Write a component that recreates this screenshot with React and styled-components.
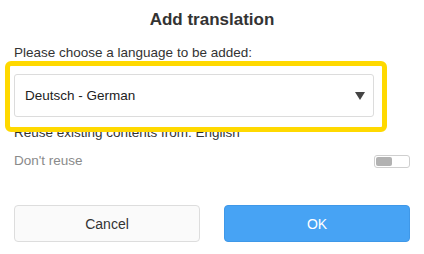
import React from 'react';
import styled, { createGlobalStyle } from 'styled-components';

const GlobalStyle = createGlobalStyle`
    body {
        margin: 0;
        background: #fff;
        font-family: "Liberation Sans", Arial, sans-serif;
        color: #333;
    }
`;

const Dialog = styled.div`
    width: 424px;
    height: 254px;
    box-sizing: border-box;
    padding: 10px 14px 0 14px;
    display: flex;
    flex-direction: column;
    background: #fff;
`;

const Title = styled.h3`
    margin: 0;
    font-size: 17px;
    line-height: 20px;
    font-weight: bold;
    text-align: center;
    color: #333;
`;

const Label = styled.div`
    margin-top: ${p => p.$top || 0}px;
    font-size: 13.5px;
    line-height: 16px;
    color: ${p => (p.$muted ? '#8a8a8a' : '#333')};
`;

const SelectWrap = styled.div`
    position: relative;
    margin-top: 13px;
    width: 360px;
`;

const Highlight = styled.div`
    position: absolute;
    top: -13px;
    left: -9px;
    right: -13px;
    bottom: -15px;
    border: 5px solid #ffd900;
    border-radius: 6px;
    pointer-events: none;
`;

const Select = styled.div`
    height: 43px;
    box-sizing: border-box;
    border: 1px solid #dcdcdc;
    border-radius: 3px;
    background: #fff;
    display: flex;
    align-items: center;
    justify-content: space-between;
    padding: 0 8px 0 10px;
    font-size: 13.5px;
    color: #222;
`;

const Arrow = styled.span`
    width: 0;
    height: 0;
    border-left: 5.5px solid transparent;
    border-right: 5.5px solid transparent;
    border-top: 8px solid #444;
    margin-top: 1px;
`;

const Row = styled.div`
    margin-top: 12px;
    display: flex;
    align-items: center;
    justify-content: space-between;
`;

const Toggle = styled.div`
    width: 36px;
    height: 13px;
    box-sizing: border-box;
    border: 1px solid #cfcfcf;
    border-radius: 3px;
    background: #fff;
    padding: 1px;
    display: flex;
    align-items: center;
`;

const Knob = styled.div`
    width: 16px;
    height: 9px;
    border-radius: 2px;
    background: #b2b2b2;
`;

const Buttons = styled.div`
    margin-top: 36px;
    display: grid;
    grid-template-columns: 1fr 1fr;
    gap: 24px;
`;

const Button = styled.button`
    height: 37px;
    box-sizing: border-box;
    border-radius: 4px;
    font-family: inherit;
    font-size: 14px;
    cursor: pointer;
    border: 1px solid ${p => (p.$primary ? '#3f98e8' : '#dddddd')};
    background: ${p => (p.$primary ? '#47a3f4' : '#fafafa')};
    color: ${p => (p.$primary ? '#fff' : '#333')};
`;

export default function App() {
    return (
        <>
            <GlobalStyle />
            <Dialog>
                <Title>Add translation</Title>
                <Label $top={15}>Please choose a language to be added:</Label>
                <SelectWrap>
                    <Select>
                        <span>Deutsch - German</span>
                        <Arrow />
                    </Select>
                    <Highlight />
                </SelectWrap>
                <Label $top={8}>Reuse existing contents from: English</Label>
                <Row>
                    <Label $muted>Don't reuse</Label>
                    <Toggle>
                        <Knob />
                    </Toggle>
                </Row>
                <Buttons>
                    <Button>Cancel</Button>
                    <Button $primary>OK</Button>
                </Buttons>
            </Dialog>
        </>
    );
}
